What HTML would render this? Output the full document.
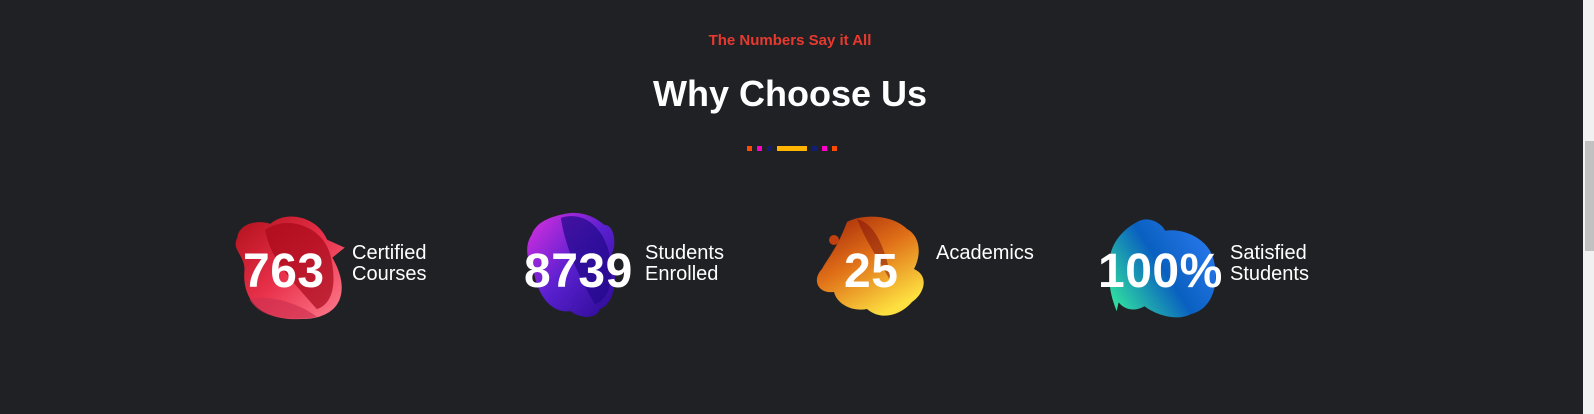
<!DOCTYPE html>
<html><head><meta charset="utf-8"><style>
html,body{margin:0;padding:0;width:1594px;height:414px;overflow:hidden;background:#202125;font-family:"Liberation Sans",sans-serif;}
.sb{position:absolute;left:1583px;top:0;width:11px;height:414px;background:#f1f1f1}
.th{position:absolute;left:1585px;top:141px;width:9px;height:110px;background:#c1c1c1}
.sub{position:absolute;left:0;width:1580px;top:32px;text-align:center;color:#e8392f;font-weight:bold;font-size:15px}
.h{position:absolute;left:0;width:1580px;top:73px;text-align:center;color:#fff;font-weight:bold;font-size:36px}
.d{position:absolute;top:146px;height:5px}
.num{position:absolute;color:#fff;font-weight:bold;font-size:48px;top:244px;letter-spacing:0.5px}
.lab{position:absolute;color:#fff;font-size:20px;line-height:21px;top:243px}
svg{position:absolute}
</style></head><body>
<div class="sub">The Numbers Say it All</div>
<div class="h">Why Choose Us</div>
<div class="d" style="left:747px;width:5px;background:#ff4a00"></div>
<div class="d" style="left:757px;width:5px;background:#ff00c8"></div>
<div class="d" style="left:767px;width:5px;background:#141e6e"></div>
<div class="d" style="left:777px;width:30px;background:#ffb400"></div>
<div class="d" style="left:812px;width:5px;background:#141e6e"></div>
<div class="d" style="left:822px;width:5px;background:#ff00c8"></div>
<div class="d" style="left:832px;width:5px;background:#ff4a00"></div>

<svg style="left:229px;top:210px" width="124" height="114" viewBox="0 0 120 115" preserveAspectRatio="none">
<defs><linearGradient id="g1" x1="0" y1="0" x2="1" y2="1"><stop offset="0" stop-color="#b0101a"/><stop offset=".5" stop-color="#e8304a"/><stop offset="1" stop-color="#ff7f90"/></linearGradient></defs>
<path d="M8 28 C10 12 30 10 40 14 C55 0 85 6 95 30 L112 38 L100 48 C118 80 110 110 70 110 C30 112 12 90 15 60 C15 45 2 40 8 28Z" fill="url(#g1)"/>
<path d="M35 20 C55 5 90 15 98 45 C105 75 100 95 85 100 C60 70 40 50 35 20Z" fill="#a8081a" opacity=".7"/>
<path d="M20 90 C40 85 70 95 85 108 C60 112 30 110 20 90Z" fill="#d03050" opacity=".7"/>
</svg>
<div class="num" style="left:243px">763</div>
<div class="lab" style="left:352px">Certified<br>Courses</div>

<svg style="left:522px;top:210px" width="102" height="114" viewBox="0 0 105 115" preserveAspectRatio="none">
<defs><linearGradient id="g2" x1="0" y1="0" x2="1" y2="1"><stop offset="0" stop-color="#e030e0"/><stop offset=".5" stop-color="#5a20d0"/><stop offset="1" stop-color="#2a0a90"/></linearGradient></defs>
<path d="M10 25 C15 10 35 5 50 3 C70 2 80 12 85 15 C95 15 98 35 92 45 C100 70 95 95 80 100 C78 110 60 110 50 102 C30 105 15 85 12 60 C4 50 3 35 10 25Z" fill="url(#g2)"/>
<path d="M40 8 C65 0 85 20 90 45 C95 70 90 90 75 95 C60 70 45 40 40 8Z" fill="#240a8c" opacity=".75"/>
</svg>
<div class="num" style="left:524px">8739</div>
<div class="lab" style="left:645px">Students<br>Enrolled</div>

<svg style="left:812px;top:214px" width="120" height="108" viewBox="0 0 120 108" preserveAspectRatio="none">
<defs><linearGradient id="g3" x1="0" y1="0" x2=".6" y2="1"><stop offset="0" stop-color="#a02008"/><stop offset=".5" stop-color="#e07018"/><stop offset="1" stop-color="#fde040"/></linearGradient></defs>
<circle cx="22" cy="26" r="5" fill="#c04010"/>
<path d="M35 8 C50 0 80 0 95 15 C108 22 110 40 102 55 C118 62 112 80 100 88 C90 100 70 108 55 95 C40 98 25 90 22 78 C5 80 0 65 10 55 C15 45 25 35 35 8Z" fill="url(#g3)"/>
<path d="M45 5 C65 10 75 40 80 70 C70 50 55 30 45 5Z" fill="#801008" opacity=".5"/>
</svg>
<div class="num" style="left:844px">25</div>
<div class="lab" style="left:936px">Academics</div>

<svg style="left:1098px;top:216px" width="124" height="106" viewBox="0 0 120 108" preserveAspectRatio="none">
<defs><linearGradient id="g4" x1="0" y1=".8" x2="1" y2=".2"><stop offset="0" stop-color="#30e0a0"/><stop offset=".5" stop-color="#0a60c0"/><stop offset="1" stop-color="#2a7af0"/></linearGradient></defs>
<path d="M40 5 C50 0 62 8 65 15 C85 12 108 25 112 45 C118 70 110 95 90 100 C75 108 55 100 45 92 C35 98 25 95 20 88 L18 97 C12 80 10 70 12 55 C8 35 20 15 40 5Z" fill="url(#g4)"/>
</svg>
<div class="num" style="left:1098px">100%</div>
<div class="lab" style="left:1230px">Satisfied<br>Students</div>

<div class="sb"></div><div class="th"></div>
</body></html>
